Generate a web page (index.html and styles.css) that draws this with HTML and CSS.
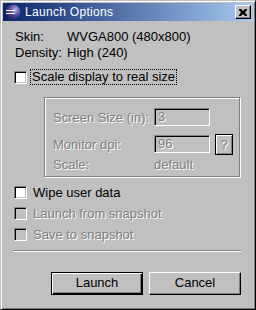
FILE: index.html
```html
<!DOCTYPE html>
<html lang="en">
  <head>
    <meta charset="UTF-8" />
    <title>Launch Options</title>
    <link rel="stylesheet" href="styles.css">
  </head>
  <body>
    <div class="window">
      <!-- Title bar -->
      <div class="titlebar">
        <svg class="app-icon" width="16" height="16" viewBox="0 0 16 16">
          <defs>
            <radialGradient id="orb" cx="0.65" cy="0.35" r="0.75">
              <stop offset="0" stop-color="#b8b0e8" />
              <stop offset="0.5" stop-color="#564a9c" />
              <stop offset="1" stop-color="#1e1848" />
            </radialGradient>
          </defs>
          <circle cx="8" cy="8" r="7.5" fill="url(#orb)" />
          <rect x="1" y="6" width="9" height="1" fill="#fff" />
          <rect x="1" y="9" width="9" height="1" fill="#fff" />
        </svg>
        <span class="title">Launch Options</span>
        <div class="close-btn">
          <svg width="8" height="7" viewBox="0 0 8 7">
            <path d="M0 0h2l2 2 2-2h2v1l-2 2.5 2 2.5v1h-2l-2-2-2 2h-2v-1l2-2.5-2-2.5z" fill="#000" />
          </svg>
        </div>
      </div>

      <div class="content">
        <div class="info-row"><span class="info-label">Skin:</span><span>WVGA800 (480x800)</span></div>
        <div class="info-row"><span class="info-label">Density:</span><span>High (240)</span></div>

        <div class="check-row scale-row">
          <span class="checkbox"></span>
          <span class="focus-label">Scale display to real size</span>
        </div>

        <!-- Scale group -->
        <div class="group">
          <div class="group-row first">
            <span class="group-label disabled">Screen Size (in):</span>
            <span class="field disabled">3</span>
          </div>
          <div class="group-row">
            <span class="group-label disabled">Monitor dpi:</span>
            <span class="field disabled">96</span>
            <span class="small-btn disabled">?</span>
          </div>
          <div class="group-row last">
            <span class="group-label disabled">Scale:</span>
            <span class="disabled">default</span>
          </div>
        </div>

        <div class="check-row option">
          <span class="checkbox"></span>
          <span>Wipe user data</span>
        </div>
        <div class="check-row option">
          <span class="checkbox off"></span>
          <span class="disabled">Launch from snapshot</span>
        </div>
        <div class="check-row option">
          <span class="checkbox off"></span>
          <span class="disabled">Save to snapshot</span>
        </div>

        <div class="separator"></div>

        <div class="buttons">
          <div class="btn default">Launch</div>
          <div class="btn">Cancel</div>
        </div>
      </div>
    </div>
  </body>
</html>
```

FILE: styles.css
```css
/* Classic window look */
body {
  margin: 0;
  background: #c0c0c0;
  font-family: "Liberation Sans", Arial, sans-serif;
  font-size: 13px;
  color: #000;
}

.window {
  width: 256px;
  height: 310px;
  box-sizing: border-box;
  border: 1px solid;
  border-color: #c0c0c0 #000 #000 #c0c0c0;
  box-shadow: inset 1px 1px #fff, inset -1px -1px #808080;
  padding: 2px;
  background: #c0c0c0;
}

/* Title bar */
.titlebar {
  height: 18px;
  display: flex;
  align-items: center;
  background: linear-gradient(to right, #0a246a, #a6caf0);
  color: #fff;
  padding: 0 2px 0 2px;
}

.app-icon {
  margin-right: 4px;
}

.title {
  font-size: 12px;
  flex: 1;
  letter-spacing: 0.3px;
}

.close-btn {
  width: 16px;
  height: 14px;
  box-sizing: border-box;
  background: #c0c0c0;
  border: 1px solid;
  border-color: #fff #000 #000 #fff;
  box-shadow: inset -1px -1px #808080;
  display: flex;
  align-items: center;
  justify-content: center;
}

/* Dialog body */
.content {
  padding: 8px 12px 0 11px;
}

.info-row {
  height: 16px;
  line-height: 16px;
  display: flex;
  padding-left: 1px;
}

.info-label {
  width: 52px;
}

.check-row {
  display: flex;
  align-items: center;
}

.scale-row {
  height: 16px;
  margin-top: 8px;
  margin-bottom: 12px;
}

.option {
  height: 21px;
}

.checkbox {
  width: 13px;
  height: 13px;
  box-sizing: border-box;
  background: #fff;
  border: 1px solid;
  border-color: #808080 #fff #fff #808080;
  box-shadow: inset 1px 1px #000, inset -1px -1px #c0c0c0;
  margin-right: 6px;
}

.checkbox.off {
  background: #c0c0c0;
}

.focus-label {
  outline: 1px dotted #000;
  padding: 0 1px;
  line-height: 14px;
  margin-left: -2px;
}

.disabled {
  color: #808080;
  text-shadow: 1px 1px 0 #fff;
}

/* Group box */
.group {
  margin-left: 30px;
  width: 196px;
  height: 80px;
  box-sizing: border-box;
  border: 1px solid #808080;
  box-shadow: inset 1px 1px #fff, 1px 1px #fff;
  padding: 10px 0 0 8px;
  margin-bottom: 5px;
}

.group-row {
  display: flex;
  align-items: center;
  height: 24px;
}

.group-row.first {
  height: 18px;
  margin-bottom: 6px;
}

.group-row.last {
  height: 16px;
}

.group-label {
  width: 101px;
  white-space: nowrap;
}

.field {
  width: 56px;
  height: 18px;
  box-sizing: border-box;
  border: 1px solid;
  border-color: #808080 #fff #fff #808080;
  box-shadow: inset 1px 1px #000, inset -1px -1px #c0c0c0;
  padding-left: 3px;
  line-height: 16px;
}

.small-btn {
  width: 18px;
  height: 21px;
  box-sizing: border-box;
  margin-left: 5px;
  border: 1px solid #000;
  box-shadow: inset 1px 1px #fff, inset -1px -1px #808080;
  text-align: center;
  line-height: 19px;
}

/* Bottom part */
.separator {
  margin-top: 5px;
  height: 1px;
  background: #808080;
  border-bottom: 1px solid #fff;
}

.buttons {
  margin-top: 20px;
  display: flex;
  justify-content: flex-end;
  gap: 6px;
}

.btn {
  width: 92px;
  height: 23px;
  box-sizing: border-box;
  border: 1px solid;
  border-color: #fff #000 #000 #fff;
  box-shadow: inset -1px -1px #808080;
  text-align: center;
  line-height: 20px;
}

.btn.default {
  border: 1px solid #000;
  box-shadow: inset 1px 1px #fff, inset -1px -1px #000, inset -2px -2px #808080;
}
```
